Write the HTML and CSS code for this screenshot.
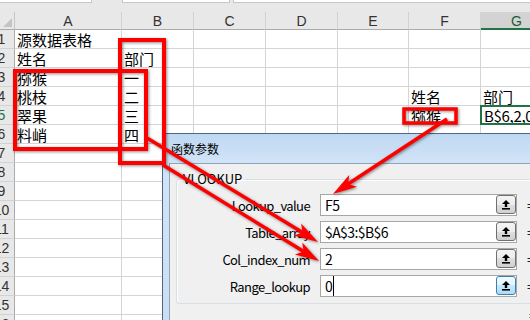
FILE: index.html
```html
<!DOCTYPE html>
<html lang="zh-CN">
<head>
    <meta charset="UTF-8">
    <meta name="viewport" content="width=device-width, initial-scale=1.0">
    <title>VLOOKUP</title>
    <link rel="stylesheet" href="styles.css">
</head>
<body>
    <div class="topbar">
        <span class="box b1"></span>
        <span class="box b2"></span>
        <span class="box b3"></span>
    </div>

    <div class="sheet">
        <div class="corner"></div>
        <div class="ch">A</div><div class="ch">B</div><div class="ch">C</div><div class="ch">D</div>
        <div class="ch">E</div><div class="ch">F</div><div class="ch ch-sel">G</div>

        <div class="rh"><span>1</span></div>
        <div class="c">源数据表格</div><div class="c"></div><div class="c"></div><div class="c"></div><div class="c"></div><div class="c"></div><div class="c"></div>

        <div class="rh"><span>2</span></div>
        <div class="c">姓名</div><div class="c">部门</div><div class="c"></div><div class="c"></div><div class="c"></div><div class="c"></div><div class="c"></div>

        <div class="rh"><span>3</span></div>
        <div class="c">猕猴</div><div class="c">一</div><div class="c"></div><div class="c"></div><div class="c"></div><div class="c"></div><div class="c"></div>

        <div class="rh"><span>4</span></div>
        <div class="c">桃枝</div><div class="c">二</div><div class="c"></div><div class="c"></div><div class="c"></div><div class="c">姓名</div><div class="c">部门</div>

        <div class="rh rh-sel"><span>5</span></div>
        <div class="c">翠果</div><div class="c">三</div><div class="c"></div><div class="c"></div><div class="c"></div><div class="c">猕猴</div><div class="c sel">B$6,2,0</div>

        <div class="rh"><span>6</span></div>
        <div class="c">料峭</div><div class="c">四</div><div class="c"></div><div class="c"></div><div class="c"></div><div class="c"></div><div class="c"></div>

        <div class="rh"><span>7</span></div>
        <div class="c"></div><div class="c"></div><div class="c"></div><div class="c"></div><div class="c"></div><div class="c"></div><div class="c"></div>
        <div class="rh"><span>8</span></div>
        <div class="c"></div><div class="c"></div><div class="c"></div><div class="c"></div><div class="c"></div><div class="c"></div><div class="c"></div>
        <div class="rh"><span>9</span></div>
        <div class="c"></div><div class="c"></div><div class="c"></div><div class="c"></div><div class="c"></div><div class="c"></div><div class="c"></div>
        <div class="rh"><span>10</span></div>
        <div class="c"></div><div class="c"></div><div class="c"></div><div class="c"></div><div class="c"></div><div class="c"></div><div class="c"></div>
        <div class="rh"><span>11</span></div>
        <div class="c"></div><div class="c"></div><div class="c"></div><div class="c"></div><div class="c"></div><div class="c"></div><div class="c"></div>
        <div class="rh"><span>12</span></div>
        <div class="c"></div><div class="c"></div><div class="c"></div><div class="c"></div><div class="c"></div><div class="c"></div><div class="c"></div>
        <div class="rh"><span>13</span></div>
        <div class="c"></div><div class="c"></div><div class="c"></div><div class="c"></div><div class="c"></div><div class="c"></div><div class="c"></div>
        <div class="rh"><span>14</span></div>
        <div class="c"></div><div class="c"></div><div class="c"></div><div class="c"></div><div class="c"></div><div class="c"></div><div class="c"></div>
        <div class="rh"><span>15</span></div>
        <div class="c"></div><div class="c"></div><div class="c"></div><div class="c"></div><div class="c"></div><div class="c"></div><div class="c"></div>
        <div class="rh"><span>16</span></div>
        <div class="c"></div><div class="c"></div><div class="c"></div><div class="c"></div><div class="c"></div><div class="c"></div><div class="c"></div>
    </div>

    <div class="dialog">
        <div class="titlebar">函数参数</div>
        <div class="client">
            <fieldset class="group">
                <legend>VLOOKUP</legend>

                <div class="field">
                    <label>Lookup_value</label>
                    <div class="input"><span>F5</span><span class="btn"><svg viewBox="0 0 10 11" width="10" height="11"><path d="M5 1 L9 5 L6.2 5 L6.2 8 L3.8 8 L3.8 5 L1 5 Z"/><rect x="1" y="9" width="8" height="1.6"/></svg></span></div>
                    <span class="eq">=</span>
                </div>

                <div class="field">
                    <label>Table_array</label>
                    <div class="input"><span>$A$3:$B$6</span><span class="btn"><svg viewBox="0 0 10 11" width="10" height="11"><path d="M5 1 L9 5 L6.2 5 L6.2 8 L3.8 8 L3.8 5 L1 5 Z"/><rect x="1" y="9" width="8" height="1.6"/></svg></span></div>
                    <span class="eq">=</span>
                </div>

                <div class="field">
                    <label>Col_index_num</label>
                    <div class="input"><span>2</span><span class="btn"><svg viewBox="0 0 10 11" width="10" height="11"><path d="M5 1 L9 5 L6.2 5 L6.2 8 L3.8 8 L3.8 5 L1 5 Z"/><rect x="1" y="9" width="8" height="1.6"/></svg></span></div>
                    <span class="eq">=</span>
                </div>

                <div class="field">
                    <label>Range_lookup</label>
                    <div class="input"><span class="caret">0</span><span class="btn btn-focus"><svg viewBox="0 0 10 11" width="10" height="11"><path d="M5 1 L9 5 L6.2 5 L6.2 8 L3.8 8 L3.8 5 L1 5 Z"/><rect x="1" y="9" width="8" height="1.6"/></svg></span></div>
                    <span class="eq">=</span>
                </div>
            </fieldset>
            <div class="result"><span class="eq">=</span></div>
        </div>
    </div>

    <svg class="marks" width="530" height="320" viewBox="0 0 530 320">
        <g class="red">
            <rect x="120" y="40" width="44" height="123"/>
            <rect x="15" y="71" width="131" height="78"/>
            <rect x="404" y="109" width="52" height="14" class="thin"/>
        </g>
        <g class="arrows">
            <line x1="447" y1="119" x2="348" y2="184"/>
            <polygon points="333,194 349.2,175 348,184.1 356.9,186.7"/>
            <line x1="147" y1="138" x2="302.6" y2="232.6"/>
            <polygon points="318,242 293.9,235.5 302.6,232.6 301.1,223.5"/>
            <line x1="163" y1="165" x2="303.7" y2="251.6"/>
            <polygon points="319,261 294.9,254.4 303.7,251.6 302.2,242.5"/>
        </g>
    </svg>
</body>
</html>
```

FILE: styles.css
```css
html {
  box-sizing: border-box;
  font-family: "Liberation Sans", "Noto Sans CJK SC", sans-serif;
  font-size: 14px;
}

*,
*:before,
*:after {
  box-sizing: inherit;
}

body {
  margin: 0;
  width: 530px;
  height: 320px;
  overflow: hidden;
  position: relative;
  background: #fff;
}

/* strip above the column headers */
.topbar {
  height: 12px;
  background: #e8e8e8;
  display: flex;
  align-items: flex-start;
}

.box {
  height: 3px;
  background: #fff;
  border: 1px solid #c6c6c6;
  border-top: 0;
}

.b1 { width: 93px; margin-left: -1px; }
.b2 { width: 108px; margin-left: 30px; }
.b3 { flex: 1; margin-left: 3px; margin-right: -2px; }

/* the grid */
.sheet {
  display: grid;
  grid-template-columns: 15px 107px 72px 72px 72px 71px 72px 72px;
  grid-template-rows: 18px repeat(16, 19px);
}

.corner {
  background: #e8e8e8;
  border-right: 1px solid #c6c6c6;
  border-bottom: 1px solid #ababab;
  position: relative;
}

.corner:after {
  content: "";
  position: absolute;
  right: 2px;
  bottom: 2px;
  border-left: 9px solid transparent;
  border-bottom: 9px solid #c4c4c4;
}

.ch {
  background: #e8e8e8;
  border-right: 1px solid #d2d2d2;
  border-bottom: 1px solid #ababab;
  color: #333;
  font-size: 14px;
  line-height: 18px;
  text-align: center;
}

.ch-sel {
  background: #d3d3d3;
  border-bottom: 2px solid #217346;
  color: #1e5b37;
}

.rh {
  background: #e8e8e8;
  border-right: 1px solid #ababab;
  border-bottom: 1px solid #d2d2d2;
  display: flex;
  justify-content: center;
  padding-right: 11px;
  overflow: hidden;
  color: #333;
  font-size: 14px;
  line-height: 19px;
}

.rh span {
  flex: none;
}

.rh-sel {
  color: #217346;
}

.c {
  border-right: 1px solid #d4d4d4;
  border-bottom: 1px solid #d4d4d4;
  padding: 1px 0 0 2px;
  font-family: "Noto Sans CJK SC", sans-serif;
  font-size: 15px;
  line-height: 18px;
  white-space: nowrap;
  color: #000;
}

.sel {
  border: 2px solid #217346;
  margin: -1px 0 0 -1px;
  padding: 0 0 0 2px;
  overflow: hidden;
  letter-spacing: -0.3px;
}

/* 函数参数 dialog */
.dialog {
  position: absolute;
  left: 162px;
  top: 133px;
  width: 400px;
  height: 220px;
  border: 1px solid #4d6683;
  background: linear-gradient(#bfd8f2, #d2e4f7 30px, #c9ddf2);
  padding: 0 0 0 6px;
}

.titlebar {
  height: 29px;
  display: flex;
  align-items: center;
  padding-left: 2px;
  font-family: "Noto Sans CJK SC", sans-serif;
  font-size: 12px;
  color: #000;
}

.client {
  height: 200px;
  background: #f0f0f0;
  border: 1px solid #8fa4bb;
  padding: 7px 0 0 6px;
  font-family: "Noto Sans CJK SC", sans-serif;
}

.group {
  margin: 0;
  width: 390px;
  padding: 7px 0 1px 0;
  border: 1px solid #d5dfe5;
  border-radius: 3px;
  box-shadow: inset 1px 1px 0 #fff;
}

.group legend {
  margin-left: 4px;
  padding: 0 2px;
  font-size: 13px;
  line-height: 16px;
  color: #000;
}

.field {
  display: flex;
  align-items: center;
  height: 22px;
  margin-bottom: 5px;
}

.field label {
  width: 133px;
  flex: none;
  text-align: right;
  font-size: 13px;
  letter-spacing: -0.6px;
  color: #000;
}

.input {
  width: 197px;
  height: 22px;
  flex: none;
  margin-left: 10px;
  border: 1px solid #a6a6a6;
  background: #fff;
  display: flex;
  align-items: flex-start;
  justify-content: space-between;
  padding-left: 4px;
  font-size: 14px;
  letter-spacing: -0.6px;
  line-height: 20px;
  color: #000;
}

.caret {
  border-right: 1px solid #000;
  padding-right: 1px;
}

.btn {
  width: 20px;
  height: 19px;
  border: 1px solid #707070;
  border-radius: 3px;
  background: linear-gradient(#f4f4f4, #ececec 50%, #dfdfdf 50%, #d0d0d0);
  display: flex;
  align-items: center;
  justify-content: center;
}

.btn svg {
  fill: #000;
}

.btn-focus {
  border-color: #3c7fb1;
  background: linear-gradient(#f1f9fe, #e4f4fd 50%, #c6e9fd 50%, #aedbf5);
}

.eq {
  margin-left: 10px;
  font-size: 14px;
  color: #222;
}

.result {
  padding: 4px 0 0 343px;
  line-height: 14px;
}

/* red annotation marks on top of everything */
.marks {
  position: absolute;
  left: 0;
  top: 0;
  pointer-events: none;
  filter: drop-shadow(1.5px 1.5px 1.5px rgba(0, 0, 0, 0.45));
}

.red rect {
  fill: none;
  stroke: #f00;
  stroke-width: 4;
}

.red .thin {
  stroke-width: 3.5;
}

.arrows line {
  stroke: #f00;
  stroke-width: 3.5;
}

.arrows polygon {
  fill: #f00;
}
```
